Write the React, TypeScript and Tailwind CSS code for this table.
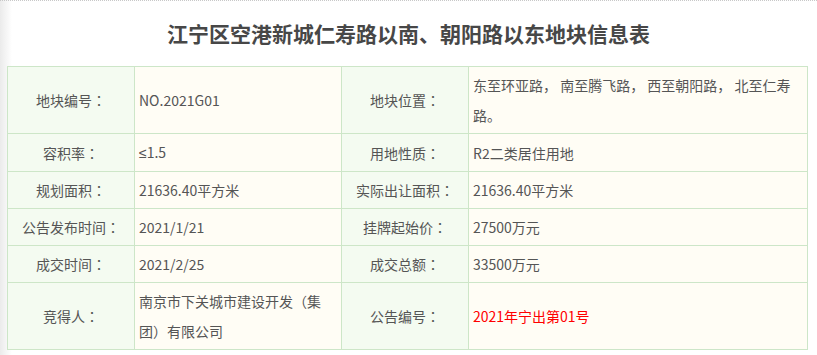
import type { ReactNode } from "react";

const font = { fontFamily: '"Microsoft YaHei", "Noto Sans CJK SC", sans-serif' };

type Row = { l1: string; v1: ReactNode; l2: string; v2: string; red?: boolean };

const rows: Row[] = [
  { l1: "地块编号", v1: "NO.2021G01", l2: "地块位置", v2: "东至环亚路， 南至腾飞路， 西至朝阳路， 北至仁寿路。" },
  {
    l1: "容积率",
    v1: (
      <>
        <span className="font-['Liberation_Sans']">≤</span>1.5
      </>
    ),
    l2: "用地性质",
    v2: "R2二类居住用地",
  },
  { l1: "规划面积", v1: "21636.40平方米", l2: "实际出让面积", v2: "21636.40平方米" },
  { l1: "公告发布时间", v1: "2021/1/21", l2: "挂牌起始价", v2: "27500万元" },
  { l1: "成交时间", v1: "2021/2/25", l2: "成交总额", v2: "33500万元" },
  { l1: "竞得人", v1: "南京市下关城市建设开发（集团）有限公司", l2: "公告编号", v2: "2021年宁出第01号", red: true },
];

const label = "border border-[#cde6c8] bg-[#f4fbf1] px-1 py-[3px] text-center align-middle";
const value = "border border-[#cde6c8] bg-[#fffdf5] px-1 py-[3px] text-left align-middle";

// colon drawn centered like the YaHei glyph
function Label({ text }: { text: string }) {
  return (
    <td className={label}>
      {text}
      <span className="font-['Noto_Sans_CJK_TC']">：</span>
    </td>
  );
}

export default function App() {
  return (
    <div
      style={font}
      className="h-[355px] w-[817px] overflow-hidden border-t border-dotted border-[#c8c8c8] bg-[linear-gradient(to_right,#ebebeb,#ffffff_12px)] text-[#555]"
    >
      <h1 className="flex h-[65px] items-center justify-center text-[21px] font-bold text-[#474747]">
        江宁区空港新城仁寿路以南、朝阳路以东地块信息表
      </h1>
      <table className="ml-[7px] w-[800px] table-fixed border-collapse text-[14px] leading-[30px]">
        <colgroup>
          <col className="w-[127px]" />
          <col className="w-[207px]" />
          <col className="w-[127px]" />
          <col className="w-[339px]" />
        </colgroup>
        <tbody>
          {rows.map((r) => (
            <tr key={r.l1}>
              <Label text={r.l1} />
              <td className={value}>{r.v1}</td>
              <Label text={r.l2} />
              <td className={value + (r.red ? " text-[#ff0000]" : "")}>{r.v2}</td>
            </tr>
          ))}
        </tbody>
      </table>
    </div>
  );
}
